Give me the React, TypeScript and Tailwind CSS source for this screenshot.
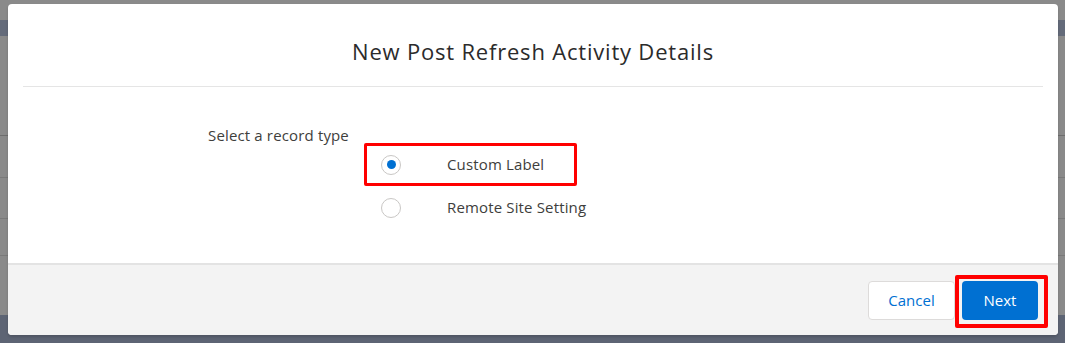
import React from 'react';

const font = { fontFamily: '"Open Sans", "Noto Sans", Arial, sans-serif' };

function Radio({ checked }: { checked?: boolean }) {
  return (
    <span className="flex h-[20px] w-[20px] shrink-0 items-center justify-center rounded-full border border-[#c9c7c5] bg-white">
      {checked && <span className="h-[9px] w-[9px] rounded-full bg-[#0070d2]" />}
    </span>
  );
}

function Option({ label, checked, marked }: { label: string; checked?: boolean; marked?: boolean }) {
  return (
    <label
      className={`flex h-[43px] w-[213px] cursor-pointer items-center gap-[46px] rounded-[2px] border-[3px] pl-[14px] ${
        marked ? 'border-[#ff0000]' : 'border-transparent'
      }`}
    >
      <Radio checked={checked} />
      <span className="whitespace-nowrap text-[15px] tracking-[0.15px] text-[#3e3e3c]">{label}</span>
    </label>
  );
}

export default function App() {
  return (
    <div className="relative h-[343px] w-[1065px] overflow-hidden bg-[#8a8a8a]" style={font}>
      {/* dimmed page behind the modal */}
      <div className="flex h-full flex-col">
        <div className="h-[20px]" />
        <div className="h-[16px] bg-[#646b7a]" />
        <div className="h-[99px]" />
        <div className="h-[1px] bg-[#6e6e6e]" />
        <div className="h-[41px]" />
        <div className="h-[1px] bg-[#7a7a7a]" />
        <div className="h-[40px]" />
        <div className="h-[1px] bg-[#7a7a7a]" />
        <div className="h-[36px]" />
        <div className="h-[1px] bg-[#7a7a7a]" />
        <div className="flex-1" />
        <div className="h-[28px] bg-[#5d6474]" />
      </div>

      {/* modal */}
      <div className="absolute left-[8px] top-[4px] flex h-[331px] w-[1050px] flex-col rounded-[4px] bg-white shadow-[0_2px_3px_rgba(0,0,0,0.16)]">
        <div className="flex h-[82px] items-center justify-center pt-[12px]">
          <h2 className="text-[22px] font-normal tracking-[0.8px] text-[#2b2b2b]">
            New Post Refresh Activity Details
          </h2>
        </div>
        <div className="mx-[15px] h-[1px] bg-[#e5e5e5]" />

        <div className="flex flex-1 items-start pl-[200px] pt-[38px]">
          <div className="w-[156px] text-[15px] leading-[20px] tracking-[0.15px] text-[#3e3e3c]">
            Select a record type
          </div>
          <div className="mt-[18px] flex flex-col">
            <Option label="Custom Label" checked marked />
            <Option label="Remote Site Setting" />
          </div>
        </div>

        <div className="flex h-[72px] items-start justify-end rounded-b-[4px] border-t-2 border-[#e3e3e3] bg-[#f3f3f3] pr-[10px] pt-[10px]">
          <button className="mt-[6px] h-[39px] w-[87px] rounded-[4px] border border-[#dddbda] bg-white text-[15px] text-[#0070d2]">
            Cancel
          </button>
          <div className="rounded-[2px] border-[4px] border-[#ff0000] pb-[4px] pl-[3px] pr-[6px] pt-[2px]">
            <button className="h-[39px] w-[76px] rounded-[4px] bg-[#0070d2] text-[15px] text-white">Next</button>
          </div>
        </div>
      </div>
    </div>
  );
}
